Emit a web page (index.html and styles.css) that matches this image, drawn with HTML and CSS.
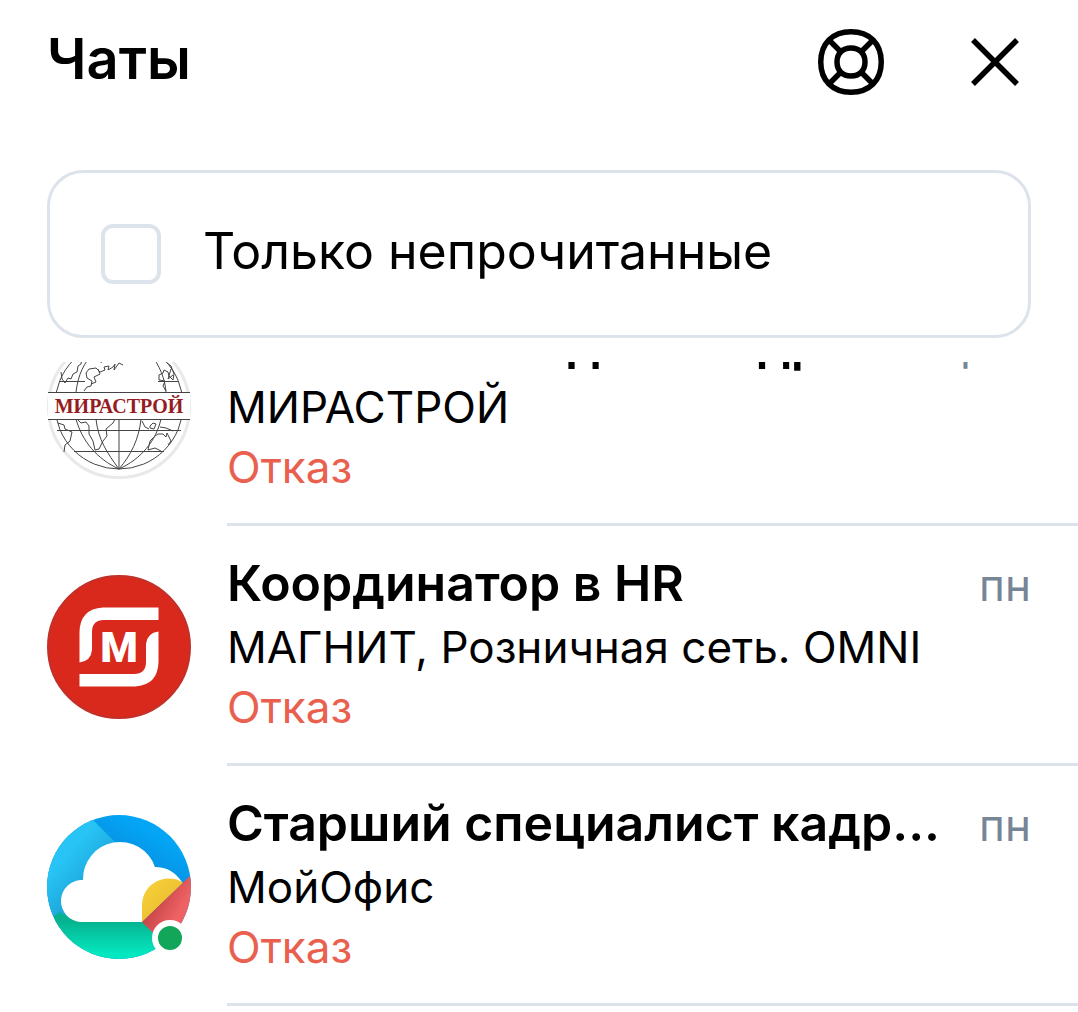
FILE: index.html
```html
<!DOCTYPE html>
<html lang="ru">
<head>
    <meta charset="UTF-8">
    <meta name="viewport" content="width=device-width, initial-scale=1.0">
    <title>Чаты</title>
    <link rel="stylesheet" href="styles.css">
</head>
<body>
    <header class="header">
        <h1>Чаты</h1>
        <div class="actions">
            <button class="icon-btn" type="button" aria-label="Помощь">
                <svg viewBox="0 0 72 72" fill="none" stroke="#000" stroke-width="5.500">
                    <path d="M36 5.750C54.500 5.750 66.250 17.500 66.250 36S54.500 66.250 36 66.250 5.750 54.500 5.750 36 17.500 5.750 36 5.750Z"/>
                    <path d="M36 22C44.500 22 50 27.500 50 36S44.500 50 36 50 22 44.500 22 36 27.500 22 36 22Z"/>
                    <path d="M14 14l12 12M58 14L46 26M14 58l12-12M58 58L46 46"/>
                </svg>
            </button>
            <button class="icon-btn" type="button" aria-label="Закрыть">
                <svg viewBox="0 0 72 72" fill="none" stroke="#000" stroke-width="5.500">
                    <path d="M14 14l44 44M58 14L14 58"/>
                </svg>
            </button>
        </div>
    </header>

    <label class="filter" for="unread">
        <input type="checkbox" id="unread">
        <span>Только непрочитанные</span>
    </label>

    <main class="chats">
        <ul class="chat-list">
            <li class="chat">
                <div class="avatar">
                    <svg viewBox="0 0 144 144">
                        <circle cx="72" cy="72" r="70.500" fill="#fff" stroke="#e9e9e9" stroke-width="3"/>
                        <g fill="none" stroke="#444" stroke-width="1">
                            <circle cx="72" cy="70" r="64"/>
                            <!-- latitudes -->
                            <path d="M13 46.500H38M111 46.500H131M10 95.500H134M27 116.500H117"/>
                            <!-- meridians -->
                            <path d="M72 84V134M72 134C60 118 51 104 49 84M72 134C84 120 92 104 94 84M72 134C50 124 35 106 29 84M72 134C94 124 109 106 114 84"/>
                            <path d="M29 57C31 40 37 27 47 18M119 57C118 44 113 31 103 18"/>
                            <!-- north coasts -->
                            <path d="M36 19L34 29L31 31L30 37L26 39L24 44L21 43L18 48L15 44L14 37M37 56L40 52L44 51L45 46L40 43L39 38L42 34L49 33L53 37L58 35L57 32L62 31L61 35L66 32L68 29L67 35L72 28L76 30M58 18L54 28M51 34L53 39L47 42L49 47L44 49"/>
                            <path d="M120 28L124 31L127 39L126 45L122 41L121 37L117 35L116 38L112 40V45L118 46L116 51L119 56M124 34L121 44L126 40"/>
                            <!-- south coasts -->
                            <path d="M11 88L17 90L18 94L25 97L23 106L18 110L17 117M31 85L34 88L39 87L42 91L42 99L46 106L48 115L52 114L56 106L60 101L59 94L66 88L68 84"/>
                            <path d="M95 86L98 92L102 94M103 91L106 88L109 89L107 94L103 93ZM113 92L119 93L126 96M101 115L103 106L108 101L111 99L116 99L119 102L120 98L124 106L121 110M101 115L108 113L114 116"/>
                        </g>
                        <rect x="1" y="57.500" width="142" height="27" fill="#fff"/>
                        <path d="M1 57.500H143M1 84.500H143" stroke="#444"/>
                        <text class="globe-text" x="72" y="78" text-anchor="middle">МИРАСТРОЙ</text>
                    </svg>
                </div>
                <div class="chat-body">
                    <div class="chat-top">
                        <h2>Начальник отдела кадр</h2>
                        <time>25 фев</time>
                    </div>
                    <p>МИРАСТРОЙ</p>
                    <p class="status">Отказ</p>
                </div>
            </li>
            <li class="chat">
                <div class="avatar">
                    <svg viewBox="0 0 144 144">
                        <circle cx="72" cy="72" r="71" fill="#d9291c" stroke="#c2302a" stroke-width="2"/>
                        <g fill="#fff">
                            <path id="bracket" d="M111.500 32.500V45H57Q45 45 45 57V75Q44 86 32.500 87.500V57Q33 34 56 32.500Z"/>
                            <use href="#bracket" transform="rotate(180 72 72)"/>
                        </g>
                        <text class="magnit-text" x="72" y="87" text-anchor="middle">M</text>
                    </svg>
                </div>
                <div class="chat-body">
                    <div class="chat-top">
                        <h2>Координатор в HR</h2>
                        <time>пн</time>
                    </div>
                    <p>МАГНИТ, Розничная сеть. OMNI</p>
                    <p class="status">Отказ</p>
                </div>
            </li>
            <li class="chat">
                <div class="avatar">
                    <svg viewBox="0 0 144 144">
                        <defs>
                            <clipPath id="round"><circle cx="72" cy="72" r="72"/></clipPath>
                            <linearGradient id="blue" x1="0.300" y1="0.800" x2="0.700" y2="0.100">
                                <stop offset="0.400" stop-color="#087fd0"/>
                                <stop offset="1" stop-color="#04a5f5"/>
                            </linearGradient>
                            <linearGradient id="cyan" x1="0.800" y1="0.900" x2="0.300" y2="0.300">
                                <stop offset="0" stop-color="#1488bd"/>
                                <stop offset="1" stop-color="#27c4f5"/>
                            </linearGradient>
                            <linearGradient id="green" x1="0" y1="0" x2="0" y2="1">
                                <stop offset="0.150" stop-color="#06b18e"/>
                                <stop offset="0.800" stop-color="#04e8c0"/>
                            </linearGradient>
                            <linearGradient id="red" x1="0" y1="0" x2="1" y2="1">
                                <stop offset="0.300" stop-color="#c9474a"/>
                                <stop offset="0.600" stop-color="#ee6264"/>
                            </linearGradient>
                            <linearGradient id="yellow" x1="0" y1="0" x2="1" y2="1">
                                <stop offset="0" stop-color="#fad339"/>
                                <stop offset="1" stop-color="#e3b52f"/>
                            </linearGradient>
                        </defs>
                        <g clip-path="url(#round)">
                            <rect width="144" height="144" fill="url(#blue)"/>
                            <path d="M0 0H41L84 43V112H0Z" fill="url(#cyan)"/>
                            <path d="M0 106L13 97L24 104H95L144 150H0Z" fill="url(#green)"/>
                            <path d="M34 107A21 21 0 1 1 36 65A37 37 0 0 1 108 52Q125 52 135 67L95 107Z" fill="#fff"/>
                            <path d="M95 107V91C95 67 120 58 135 67L136 68Z" fill="url(#yellow)"/>
                            <path d="M95 107L144 60V144H132Z" fill="url(#red)"/>
                        </g>
                    </svg>
                    <span class="online"></span>
                </div>
                <div class="chat-body">
                    <div class="chat-top">
                        <h2>Старший специалист кадр...</h2>
                        <time>пн</time>
                    </div>
                    <p>МойОфис</p>
                    <p class="status">Отказ</p>
                </div>
            </li>
        </ul>
    </main>
</body>
</html>
```
FILE: styles.css
```css
* {
    box-sizing: border-box;
}

body {
    margin: 0;
    font-family: Inter, "Liberation Sans", sans-serif;
    color: #000;
    background-color: #fff;
}

h1, h2, p, ul {
    margin: 0;
    padding: 0;
}

.header {
    display: flex;
    align-items: center;
    justify-content: space-between;
    padding: 26px 47px 24px 47px;
}

h1 {
    padding-bottom: 6px;
    font-size: 56px;
    line-height: 64px;
    font-weight: 600;
}

.actions {
    display: flex;
    gap: 72px;
}

.icon-btn {
    width: 72px;
    height: 72px;
    padding: 0;
    border: none;
    background: none;
    cursor: pointer;
}

.icon-btn svg {
    display: block;
    width: 100%;
}

.filter {
    display: flex;
    align-items: center;
    gap: 42px;
    margin: 48px 47px 24px;
    padding: 51px;
    border: 3px solid #dce3eb;
    border-radius: 36px;
    font-size: 50px;
    line-height: 54px;
    cursor: pointer;
}

.filter span {
    padding-bottom: 6px;
}

.filter input {
    appearance: none;
    width: 60px;
    height: 60px;
    margin: 0;
    border: 4px solid #dce3eb;
    border-radius: 12px;
    background-color: #fff;
}

.filter input:checked {
    background-color: #0070ff;
}

.chats {
    overflow: hidden;
}

/* list is scrolled part of the way through its first row */
.chat-list {
    margin-top: -76px;
    list-style: none;
}

.chat {
    display: flex;
    gap: 36px;
    padding-left: 47px;
}

.avatar {
    position: relative;
    flex: none;
    width: 144px;
    height: 144px;
    margin-top: 49px;
}

.avatar svg {
    display: block;
    width: 100%;
}

.globe-text {
    font: bold 20px "Liberation Serif", serif;
    fill: #941c22;
}

.magnit-text {
    font: 900 43px Roboto, sans-serif;
    fill: #fff;
}

.online {
    position: absolute;
    right: 3px;
    bottom: 3px;
    width: 36px;
    height: 36px;
    border: 6px solid #fff;
    border-radius: 50%;
    background-color: #12a65a;
}

.chat-body {
    flex: 1;
    min-width: 0;
    padding: 27px 47px 26px 0;
    border-bottom: 3px solid #dce3eb;
}

.chat-top {
    display: flex;
    align-items: baseline;
    justify-content: space-between;
    gap: 36px;
    height: 64px;
}

h2 {
    overflow: hidden;
    font-size: 50px;
    line-height: 60px;
    font-weight: 600;
    white-space: nowrap;
    text-overflow: ellipsis;
}

p, time {
    font-size: 44px;
    line-height: 60px;
}

time {
    flex: none;
    color: #768696;
}

.status {
    color: #e9604f;
}
```
